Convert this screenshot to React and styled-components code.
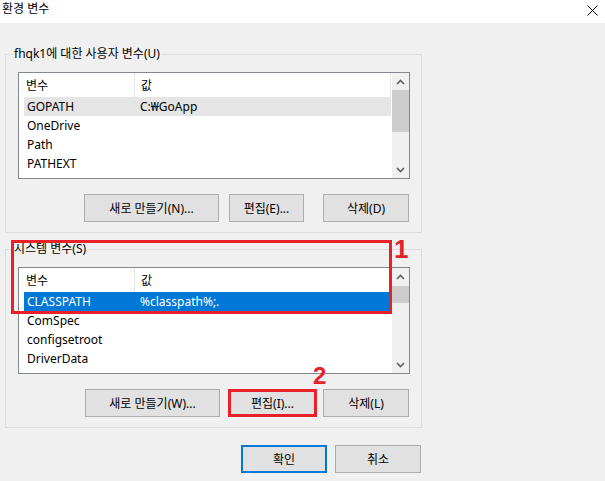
import React from 'react';
import styled, { createGlobalStyle } from 'styled-components';

const GlobalStyle = createGlobalStyle`
    html, body {
        margin: 0;
        padding: 0;
        background: #f0f0f0;
    }
    body {
        font-family: "Noto Sans", "Noto Sans CJK KR", sans-serif;
        font-size: 12px;
        color: #000;
    }
`

const Window = styled.div`
    width: 605px;
    height: 481px;
    background: #f0f0f0;
    display: flex;
    flex-direction: column;
    overflow: hidden;
`

const TitleBar = styled.div`
    height: 23px;
    background: #fff;
    display: flex;
    align-items: flex-start;
    justify-content: space-between;
    padding: 1px 7px 0 2px;
    box-sizing: border-box;
    flex-shrink: 0;
`

const Title = styled.span`
    font-size: 12px;
    line-height: 16px;
`

const CloseIcon = styled.svg`
    margin-top: 4px;
`

const Content = styled.div`
    width: 417px;
    margin-left: 5px;
    padding-top: 23px;
`

const Group = styled.fieldset`
    margin: 0;
    border: 1px solid #dcdcdc;
    padding: 0 11px 10px 12px;
    min-width: 0;
`

const Legend = styled.legend`
    margin-left: -5px;
    padding: 0 1px;
    font-size: 12px;
    line-height: 16px;
`

const Annotated = styled.div`
    position: relative;
    margin-top: 8px;
`

const RedBox = styled.div`
    position: absolute;
    left: 6px;
    top: -1px;
    width: 381px;
    height: 74px;
    border: 3px solid #e8202a;
    box-sizing: border-box;
    pointer-events: none;
`

const Marker = styled.span`
    position: absolute;
    left: ${p => p.$left}px;
    top: ${p => p.$top}px;
    font-family: "Liberation Sans", Arial, sans-serif;
    font-weight: bold;
    font-size: ${p => p.$size}px;
    line-height: 1;
    color: #e8202a;
`

const ListBox = styled.div`
    margin-top: 10px;
    height: 107px;
    border: 1px solid #828790;
    box-sizing: border-box;
    background: #fff;
    display: flex;
    overflow: hidden;
`

const ListBody = styled.div`
    flex: 1;
    overflow: hidden;
`

const HeaderRow = styled.div`
    height: 24px;
    display: grid;
    grid-template-columns: 116px 1fr;
    margin-right: 1px;
`

const HeaderCell = styled.div`
    display: flex;
    align-items: center;
    padding-left: ${p => p.$pad}px;
    border-right: 1px solid #e5e5e5;
`

const Row = styled.div`
    height: 19px;
    margin: 0 1px 0 5px;
    display: grid;
    grid-template-columns: 113px 1fr;
    align-items: center;
    white-space: nowrap;
    background: ${p => p.$selected ? '#0078d7' : p.$hover ? '#e5e5e5' : 'transparent'};
    color: ${p => p.$selected ? '#fff' : '#000'};
`

const Cell = styled.span`
    padding-left: 3px;
    overflow: hidden;
`

const ScrollBar = styled.div`
    width: 17px;
    background: #f0f0f0;
    display: flex;
    flex-direction: column;
    align-items: stretch;
`

const ArrowBox = styled.div`
    height: 17px;
    display: flex;
    align-items: center;
    justify-content: center;
`

const Track = styled.div`
    flex: 1;
    position: relative;
`

const Thumb = styled.div`
    margin-top: ${p => p.$top}px;
    height: ${p => p.$height}px;
    background: #cdcdcd;
`

const ButtonRow = styled.div`
    display: flex;
    justify-content: flex-end;
    margin-top: 15px;
    margin-right: 1px;
`

const Button = styled.button`
    width: ${p => p.$width}px;
    height: 28px;
    margin: 0 0 0 ${p => p.$ml || 0}px;
    padding: 0;
    background: #e1e1e1;
    border: ${p => p.$primary ? '2px solid #0078d7' : p.$flagged ? '3px solid #e8202a' : '1px solid #adadad'};
    box-sizing: border-box;
    font-family: "Noto Sans", "Noto Sans CJK KR", sans-serif;
    font-size: 12px;
    color: #000;
`

const Callout = styled.span`
    position: relative;
    display: inline-flex;
    margin-left: ${p => p.$ml}px;
`

const DialogButtons = styled.div`
    display: flex;
    justify-content: flex-end;
    margin-top: 17px;
    margin-right: 1px;
`

const Chevron = ({ up }) => (
    <svg width="9" height="6" viewBox="0 0 9 6">
        <polyline
            points={up ? '1,5 4.5,1.5 8,5' : '1,1 4.5,4.5 8,1'}
            fill="none"
            stroke="#606060"
            strokeWidth="1.6"
        />
    </svg>
)

function VarList({ rows, thumb }) {
    return (
        <ListBox>
            <ListBody>
                <HeaderRow>
                    <HeaderCell $pad={7}>변수</HeaderCell>
                    <HeaderCell $pad={6}>값</HeaderCell>
                </HeaderRow>
                {rows.map(r =>
                    <Row key={r.name} $selected={r.selected} $hover={r.hover}>
                        <Cell>{r.name}</Cell>
                        <Cell>{r.value}</Cell>
                    </Row>
                )}
            </ListBody>
            <ScrollBar>
                <ArrowBox><Chevron up /></ArrowBox>
                <Track>
                    <Thumb $top={thumb.top} $height={thumb.height} />
                </Track>
                <ArrowBox><Chevron /></ArrowBox>
            </ScrollBar>
        </ListBox>
    )
}

const userVars = [
    { name: 'GOPATH', value: 'C:₩GoApp', hover: true },
    { name: 'OneDrive', value: '' },
    { name: 'Path', value: '' },
    { name: 'PATHEXT', value: '' },
]

const systemVars = [
    { name: 'CLASSPATH', value: '%classpath%;.', selected: true },
    { name: 'ComSpec', value: '' },
    { name: 'configsetroot', value: '' },
    { name: 'DriverData', value: '' },
]

function App() {
    return (
        <>
            <GlobalStyle />
            <Window>
                <TitleBar>
                    <Title>환경 변수</Title>
                    <CloseIcon width="11" height="11" viewBox="0 0 11 11">
                        <path d="M0.5 0.5 L10.5 10.5 M10.5 0.5 L0.5 10.5" stroke="#000" strokeWidth="1" />
                    </CloseIcon>
                </TitleBar>

                <Content>
                    {/* user variables */}
                    <Group>
                        <Legend>fhqk1에 대한 사용자 변수(U)</Legend>
                        <VarList rows={userVars} thumb={{ top: 0, height: 42 }} />
                        <ButtonRow>
                            <Button $width={135}>새로 만들기(N)...</Button>
                            <Button $width={75} $ml={10}>편집(E)...</Button>
                            <Button $width={86} $ml={19}>삭제(D)</Button>
                        </ButtonRow>
                    </Group>

                    {/* system variables */}
                    <Annotated>
                        <Group>
                            <Legend>시스템 변수(S)</Legend>
                            <VarList rows={systemVars} thumb={{ top: 1, height: 17 }} />
                            <ButtonRow>
                                <Button $width={135}>새로 만들기(W)...</Button>
                                <Callout $ml={8}>
                                    <Button $width={89} $flagged>편집(I)...</Button>
                                    <Marker $left={85} $top={-25} $size={24}>2</Marker>
                                </Callout>
                                <Button $width={86} $ml={6}>삭제(L)</Button>
                            </ButtonRow>
                        </Group>
                        <RedBox />
                        <Marker $left={389} $top={-5} $size={26}>1</Marker>
                    </Annotated>

                    <DialogButtons>
                        <Button $width={86} $primary>확인</Button>
                        <Button $width={86} $ml={8}>취소</Button>
                    </DialogButtons>
                </Content>
            </Window>
        </>
    );
}

export default App;
